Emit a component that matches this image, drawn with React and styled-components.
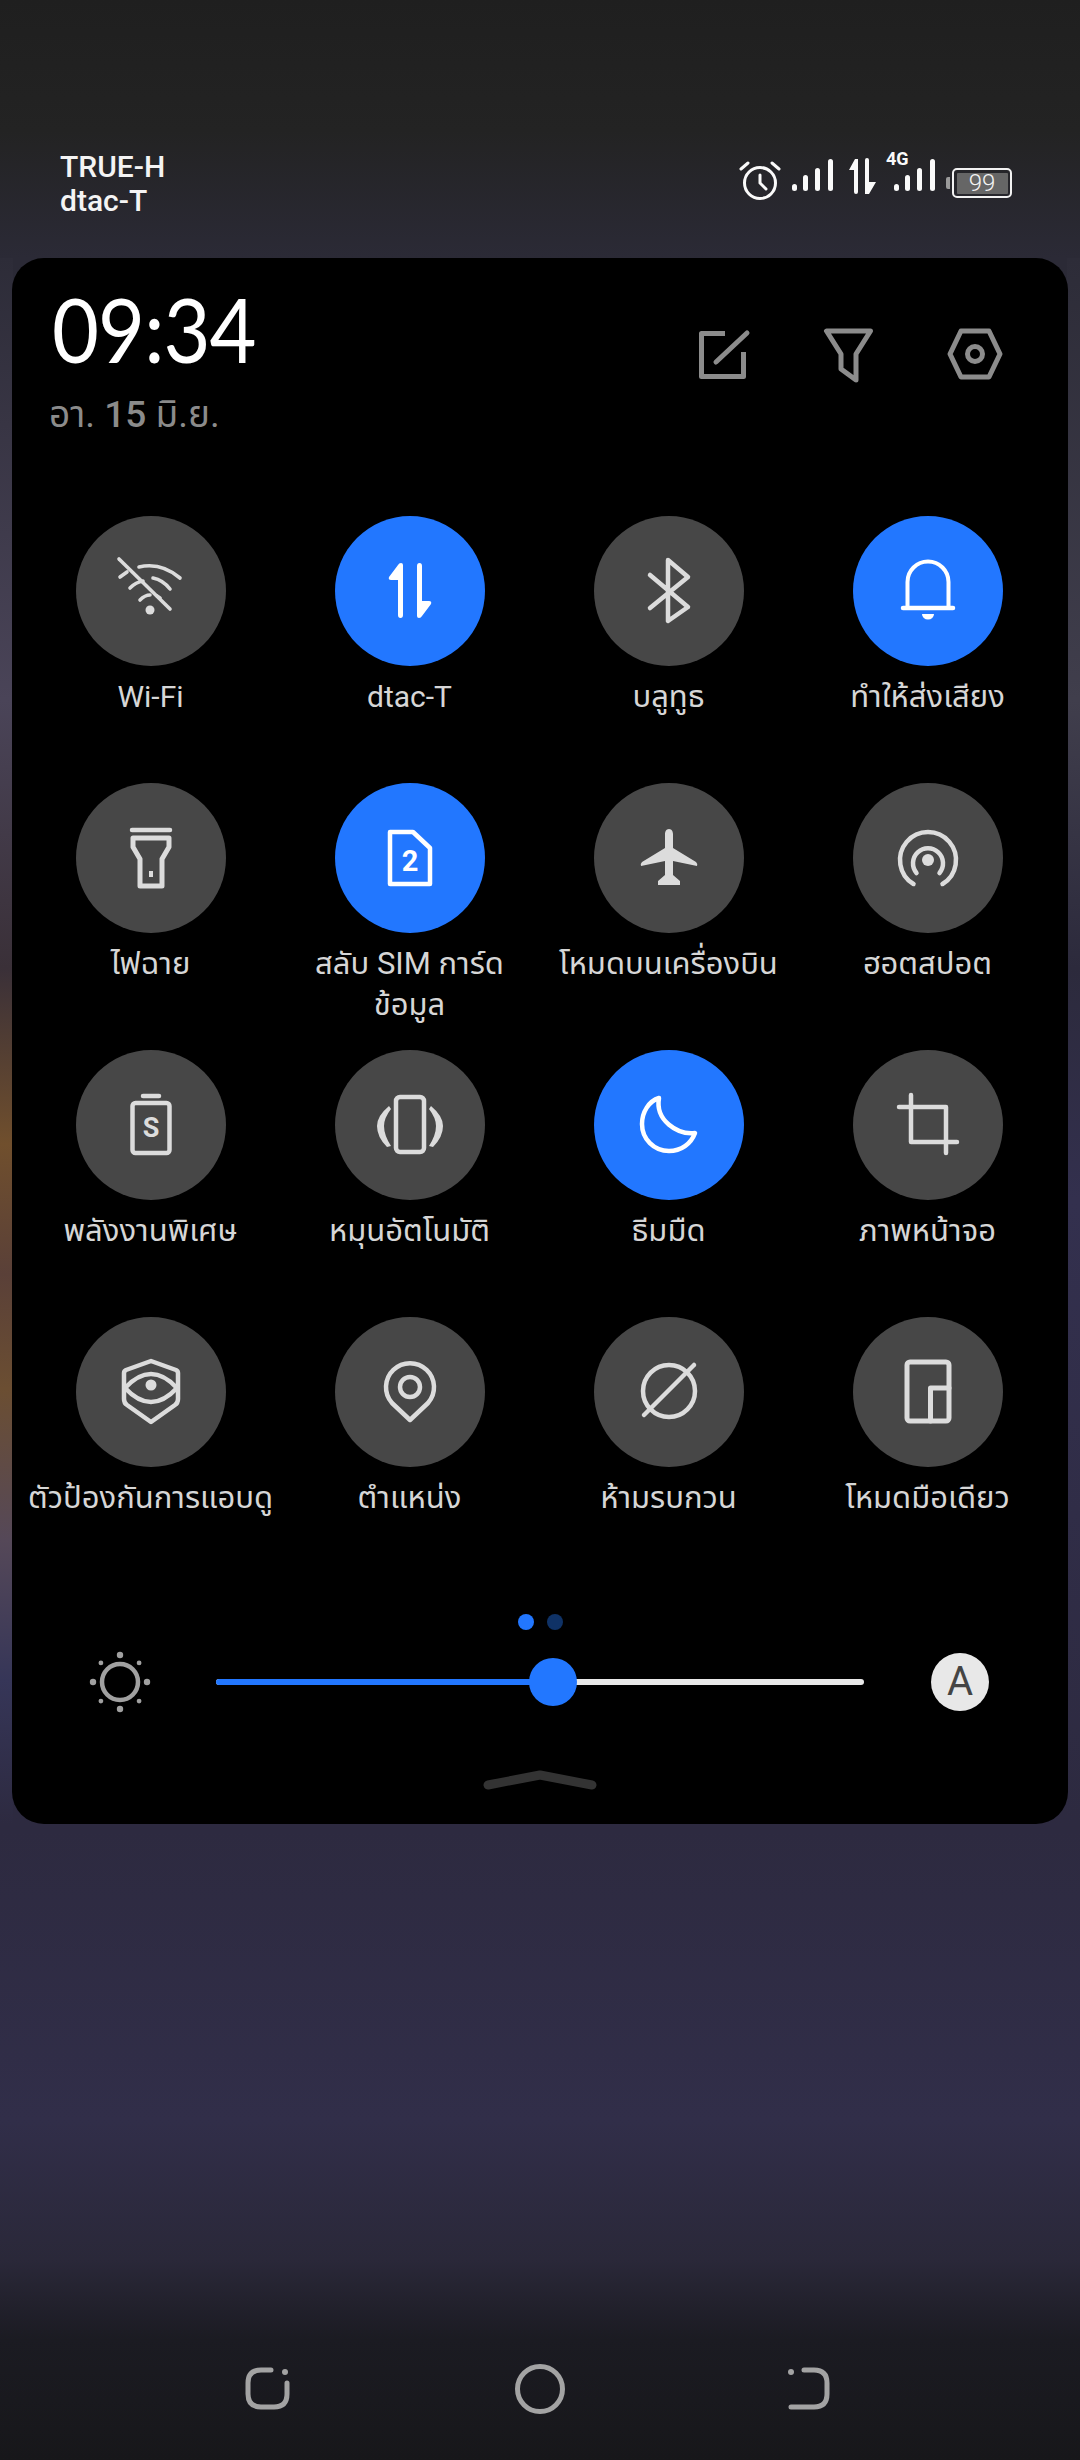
import React from "react";
import styled, { createGlobalStyle } from "styled-components";

const Global = createGlobalStyle`
  html, body { margin: 0; padding: 0; background: #1c1c20; }
  * { box-sizing: border-box; }
`;

const FONT = `Roboto, "Noto Sans Thai", "Noto Sans", "DejaVu Sans", sans-serif`;

const Screen = styled.div`
  width: 1080px;
  height: 2460px;
  overflow: hidden;
  display: flex;
  flex-direction: column;
  font-family: ${FONT};
  background:
    linear-gradient(180deg, #2d2c38 0, #4a4458 442px, #3a3038 710px, #704f2d 886px, #5a4038 1016px, #6b4e32 1131px, #554858 1282px, #363658 1422px, #2d2a40 1566px) 0 258px / 13px 1566px no-repeat,
    linear-gradient(180deg, #2d2c38 0, #403e4c 442px, #2c2a3c 710px, #33304e 942px, #2d2a40 1566px) right 0 top 258px / 13px 1566px no-repeat,
    linear-gradient(180deg, #1f1f1f 0, #232323 130px, #2b2a36 258px, #2d2a40 1830px, #312e49 2120px, #2a2839 2260px, #1b1b22 2340px, #17171a 2460px);
`;

const StatusBar = styled.header`
  height: 258px;
  flex: none;
  padding: 150px 68px 0 60px;
  display: flex;
  justify-content: space-between;
  align-items: flex-start;
`;

const Carriers = styled.div`
  color: #f4f4f4;
  font-size: 30px;
  font-weight: 500;
  line-height: 34px;
`;

const StatusIcons = styled.div`
  display: flex;
  align-items: flex-start;
  padding-top: 9px;
`;

const StatusSvg = styled.svg`
  display: block;
  flex: none;
  margin-left: ${(p) => p.$gap || 0}px;
  margin-top: ${(p) => p.$top || 0}px;
  color: #fafafa;
`;

const NetworkSignal = styled.div`
  position: relative;
  flex: none;
  margin-left: ${(p) => p.$gap}px;
`;

const NetworkTag = styled.span`
  position: absolute;
  left: -7px;
  top: -9px;
  color: #fafafa;
  font-size: 18px;
  font-weight: 700;
  line-height: 18px;
`;

const Battery = styled.div`
  position: relative;
  margin-left: 15px;
  margin-top: 9px;
  width: 60px;
  height: 30px;
  flex: none;
  border: 2.5px solid #f2f2f2;
  border-radius: 5px;
  padding: 2.5px;
  display: flex;
  &::before {
    content: "";
    position: absolute;
    left: -8px;
    top: 7px;
    width: 4px;
    height: 12px;
    border-radius: 2px 0 0 2px;
    background: #9a9a9a;
  }
`;

const BatteryFill = styled.div`
  flex: 1;
  background: #666;
  border-radius: 1px;
  color: #f4f4f4;
  font-size: 24px;
  font-weight: 300;
  line-height: 20px;
  text-align: center;
`;

const Panel = styled.section`
  margin: 0 12px;
  height: 1566px;
  flex: none;
  background: #000;
  border-radius: 32px;
  display: flex;
  flex-direction: column;
`;

const PanelHeader = styled.div`
  height: 258px;
  flex: none;
  display: flex;
  justify-content: space-between;
  padding: 0 65px 0 38px;
`;

const ClockBlock = styled.div`
  padding-top: 25px;
`;

const Clock = styled.div`
  color: #fff;
  font-family: Lato, Roboto, sans-serif;
  font-size: 90px;
  font-weight: 400;
  line-height: 90px;
  letter-spacing: -1px;
  margin-left: 2px;
  transform: scaleX(0.9);
  transform-origin: left center;
`;

const DateLine = styled.div`
  margin-top: 19px;
  margin-left: -1px;
  color: #8b8b8b;
  font-size: 37px;
  line-height: 46px;
`;

const DateNum = styled.span`
  font-weight: 500;
`;

const HeaderActions = styled.div`
  display: flex;
  gap: 70px;
  padding-top: 68px;
  align-items: flex-start;
`;

const ActionSvg = styled.svg`
  display: block;
  color: #8c8c8c;
`;

const Grid = styled.div`
  display: grid;
  grid-template-columns: repeat(4, 259px);
  grid-auto-rows: 267px;
  padding: 0 9px;
`;

const Tile = styled.div`
  display: flex;
  flex-direction: column;
  align-items: center;
`;

const Bubble = styled.div`
  width: 150px;
  height: 150px;
  flex: none;
  border-radius: 50%;
  display: flex;
  align-items: center;
  justify-content: center;
  background: ${(p) => (p.$on ? "#2277ff" : "#474747")};
  color: ${(p) => (p.$on ? "#ffffff" : "#dcdcdc")};
`;

const IconSvg = styled.svg`
  display: block;
  fill: none;
  stroke: currentColor;
  stroke-width: 4.5;
  stroke-linecap: round;
  stroke-linejoin: round;
`;

const Label = styled.div`
  margin-top: 10px;
  color: #d6d6d6;
  font-size: ${(p) => (p.$latin ? 30 : 31)}px;
  line-height: 41px;
  text-align: center;
  white-space: pre-line;
`;

const Dots = styled.div`
  display: flex;
  justify-content: center;
  gap: 13px;
  margin: 30px 0 0 -1px;
  padding-left: 2px;
`;

const Dot = styled.span`
  width: 16px;
  height: 16px;
  border-radius: 50%;
  background: ${(p) => (p.$on ? "#2277ff" : "#0f3266")};
`;

const BrightnessRow = styled.div`
  display: flex;
  align-items: center;
  height: 60px;
  margin-top: 22px;
  padding: 0 0 0 76px;
`;

const SunSvg = styled.svg`
  display: block;
  flex: none;
  color: #a0a0a0;
`;

const Track = styled.div`
  position: relative;
  width: 648px;
  height: 6px;
  margin-left: 64px;
  border-radius: 3px;
  background: #e8e8e8;
`;

const TrackFill = styled.div`
  height: 100%;
  border-radius: 3px 0 0 3px;
  background: #2277ff;
`;

const Thumb = styled.div`
  position: absolute;
  top: -21px;
  width: 48px;
  height: 48px;
  margin-left: -24px;
  border-radius: 50%;
  background: #2277ff;
`;

const AutoButton = styled.div`
  width: 58px;
  height: 58px;
  margin-left: 67px;
  border-radius: 50%;
  background: #e8e8e8;
  color: #444;
  font-size: 40px;
  font-weight: 400;
  line-height: 58px;
  text-align: center;
`;

const Handle = styled.svg`
  display: block;
  margin: 56px auto 0;
`;

const NavBar = styled.nav`
  flex: none;
  display: flex;
  justify-content: center;
  align-items: center;
  gap: 219px;
  margin-top: 538px;
`;

const NavSvg = styled.svg`
  display: block;
  fill: none;
  stroke: #a3a3a3;
  stroke-width: 5;
  stroke-linecap: round;
  stroke-linejoin: round;
`;

const NavDot = styled.circle`
  fill: #a3a3a3;
  stroke: none;
`;

const SvgLabel = styled.text`
  font-family: Roboto, sans-serif;
  fill: currentColor;
  stroke: none;
  font-weight: 700;
  text-anchor: middle;
`;

const Icon = ({ children }) => (
  <IconSvg width="80" height="80" viewBox="-40 -40 80 80">
    {children}
  </IconSvg>
);

const Solid = styled.path`
  fill: currentColor;
  stroke: none;
`;

const Filled = styled.circle`
  fill: currentColor;
  stroke: none;
`;

const icons = {
  wifi: (
    <Icon>
      <path strokeWidth="3.6" d="M-32 -32 L19 18" />
      <path strokeWidth="3.6" d="M-12 -24 Q10 -29 29 -13 M-31 -14 L-24 -19 M-21 -3 Q-15 -9 -8 -10 M2 -13 Q12 -11 19 -2 M-11 9 Q-6 4 -1 4 M6 5 L9 7" />
      <Filled cx="-1" cy="19" r="4.5" />
    </Icon>
  ),
  data: (
    <Icon>
      <Solid d="M-7 -26 Q-7 -28 -9 -28 Q-11 -28 -12 -26 L-21 -14 Q-22 -11 -19 -11 L-12 -11 L-12 24 Q-12 27 -9.5 27 Q-7 27 -7 24 Z" />
      <Solid d="M7 25 Q7 27 9 27 Q11 27 12 25 L21 13 Q22 10 19 10 L12 10 L12 -25 Q12 -28 9.5 -28 Q7 -28 7 -25 Z" />
    </Icon>
  ),
  bluetooth: (
    <Icon>
      <path d="M-19 -16 L19 16 L-1 30 L-1 -31 L19 -14 L-19 17" />
    </Icon>
  ),
  bell: (
    <Icon>
      <path strokeWidth="4" d="M-20.5 16 V-9 A20.5 20.5 0 0 1 20.5 -9 V16" />
      <path strokeWidth="4.5" d="M-25 17 H25" />
      <Solid d="M-6 23 H6 A6 5.5 0 0 1 -6 23 Z" />
    </Icon>
  ),
  flash: (
    <Icon>
      <path d="M-19 -28 H19" />
      <path strokeWidth="5" d="M-18 -20 H18 V-11 L11 1 V28 H-11 V1 L-18 -11 Z" />
      <Solid d="M-2 13 H2 V19 H-2 Z" />
    </Icon>
  ),
  sim: (
    <Icon>
      <path d="M-20 -26 H3 L20 -10 V26 H-20 Z" />
      <SvgLabel x="0" y="13" fontSize="29">2</SvgLabel>
    </Icon>
  ),
  plane: (
    <Icon>
      <Solid d="M0 -29 C-3 -29 -4 -26 -4 -24 V-10 L-27 4 Q-29 6 -28 8 L-4 3 V17 L-11 23 V27 H11 V23 L4 17 V3 L28 8 Q29 6 27 4 L4 -10 V-24 C4 -26 3 -29 0 -29 Z" />
    </Icon>
  ),
  hotspot: (
    <Icon>
      <Filled cx="0" cy="2" r="6" />
      <path d="M-11.5 15 A15 15 0 1 1 11.5 15" />
      <path d="M-14.5 26 A28 28 0 1 1 14.5 26" />
    </Icon>
  ),
  saver: (
    <Icon>
      <path d="M-8 -29 H8" />
      <rect x="-18.5" y="-22" width="37" height="50" rx="3" />
      <SvgLabel x="0" y="12" fontSize="27">S</SvgLabel>
    </Icon>
  ),
  rotate: (
    <Icon>
      <rect x="-14" y="-28" width="28" height="55" rx="4" />
      <Solid d="M-21 -19 Q-33 -9 -33 1 Q-33 12 -23 22 L-19 21 Q-26 10 -26 1 Q-26 -7 -19 -16 Z" />
      <Solid d="M21 -19 Q33 -9 33 1 Q33 12 23 22 L19 21 Q26 10 26 1 Q26 -7 19 -16 Z" />
    </Icon>
  ),
  moon: (
    <Icon>
      <path d="M-10 -27 C-20 -24 -27 -13 -27 -1 C-27 14 -15 26 0 26 C12 26 22 19 26 8 C8 10 -14 -5 -10 -27 Z" />
    </Icon>
  ),
  crop: (
    <Icon>
      <path d="M-29 -18 H18 V28 M-17 -30 V17 H29" />
    </Icon>
  ),
  shield: (
    <Icon>
      <path d="M0 -31 L25 -22 Q27 -21 27 -19 V7 Q27 11 24 13 L0 30 L-24 13 Q-27 11 -27 7 V-19 Q-27 -21 -25 -22 Z" />
      <path d="M-26 -4 Q0 -32 26 -4 Q0 24 -26 -4 Z" />
      <Filled cx="0" cy="-7" r="5.5" />
    </Icon>
  ),
  pin: (
    <Icon>
      <path d="M0 28 L-18 11 A24 24 0 1 1 18 11 Z" />
      <circle cx="0" cy="-5" r="10" />
    </Icon>
  ),
  dnd: (
    <Icon>
      <circle cx="0" cy="-1" r="26" />
      <path d="M-25 23 L25 -27" />
    </Icon>
  ),
  hand: (
    <Icon>
      <rect x="-21" y="-30" width="42" height="59" rx="3" strokeWidth="5" />
      <path strokeWidth="5" d="M2.5 29 V-4 H21" />
    </Icon>
  ),
};

const tiles = [
  ["wifi", "Wi-Fi", false, true],
  ["data", "dtac-T", true, true],
  ["bluetooth", "บลูทูธ", false],
  ["bell", "ทำให้ส่งเสียง", true],
  ["flash", "ไฟฉาย", false],
  ["sim", "สลับ SIM การ์ด\nข้อมูล", true],
  ["plane", "โหมดบนเครื่องบิน", false],
  ["hotspot", "ฮอตสปอต", false],
  ["saver", "พลังงานพิเศษ", false],
  ["rotate", "หมุนอัตโนมัติ", false],
  ["moon", "ธีมมืด", true],
  ["crop", "ภาพหน้าจอ", false],
  ["shield", "ตัวป้องกันการแอบดู", false],
  ["pin", "ตำแหน่ง", false],
  ["dnd", "ห้ามรบกวน", false],
  ["hand", "โหมดมือเดียว", false],
];

const Signal = ({ gap = 0 }) => (
  <StatusSvg $gap={gap} width="44" height="34" viewBox="0 0 44 34" fill="currentColor">
    <rect x="1" y="25" width="5" height="7" rx="2.5" />
    <rect x="12" y="16" width="5" height="16" rx="2.5" />
    <rect x="24" y="9" width="5" height="23" rx="2.5" />
    <rect x="37" y="0" width="5" height="32" rx="2.5" />
  </StatusSvg>
);

export default function App() {
  return (
    <Screen>
      <Global />
      <StatusBar>
        <Carriers>
          TRUE-H
          <br />
          dtac-T
        </Carriers>
        <StatusIcons>
          <StatusSvg $top={-1} width="44" height="44" viewBox="-22 -22 44 44" fill="none" stroke="currentColor" strokeWidth="3" strokeLinecap="round">
            <circle cx="0" cy="3" r="15.5" />
            <path d="M0 -5 V3 L6 9 M-19 -11 L-12 -17 M19 -11 L12 -17" />
          </StatusSvg>
          <Signal gap={9} />
          <StatusSvg $gap={13} $top={-1} width="30" height="38" viewBox="0 0 30 38" fill="currentColor">
            <path d="M10 1 H7 L1 12 H6 V34 Q6 36 8 36 Q10 36 10 34 Z" />
            <path d="M17 2 Q17 0 19 0 Q21 0 21 2 V24 H28 L21 36 H17 Z" />
          </StatusSvg>
          <NetworkSignal $gap={15}>
            <NetworkTag>4G</NetworkTag>
            <Signal />
          </NetworkSignal>
          <Battery>
            <BatteryFill>99</BatteryFill>
          </Battery>
        </StatusIcons>
      </StatusBar>

      <Panel>
        <PanelHeader>
          <ClockBlock>
            <Clock>09:34</Clock>
            <DateLine>
              อา. <DateNum>15</DateNum> มิ.ย.
            </DateLine>
          </ClockBlock>
          <HeaderActions>
            <ActionSvg width="54" height="56" viewBox="0 0 54 56" fill="none" stroke="currentColor" strokeWidth="5" strokeLinejoin="round">
              <path d="M28 7.5 H4.5 V50.5 H46.5 V26" />
              <path d="M50 7 L19 36" strokeLinecap="round" />
            </ActionSvg>
            <ActionSvg width="56" height="60" viewBox="0 0 56 60" fill="none" stroke="currentColor" strokeWidth="5" strokeLinejoin="round">
              <path d="M5.5 5 H49.5 L35 28 V54 L20 43 V28 Z" />
            </ActionSvg>
            <ActionSvg width="56" height="56" viewBox="0 0 56 56" fill="none" stroke="currentColor" strokeWidth="5" strokeLinejoin="round">
              <path d="M14 5 H42 L53 28 L42 51 H14 L3 28 Z" />
              <circle cx="28" cy="28" r="7.5" />
            </ActionSvg>
          </HeaderActions>
        </PanelHeader>

        <Grid>
          {tiles.map(([icon, label, on, latin]) => (
            <Tile key={icon}>
              <Bubble $on={on}>{icons[icon]}</Bubble>
              <Label $latin={latin}>{label}</Label>
            </Tile>
          ))}
        </Grid>

        <Dots>
          <Dot $on />
          <Dot />
        </Dots>

        <BrightnessRow>
          <SunSvg width="64" height="64" viewBox="-32 -32 64 64">
            <circle r="18" fill="none" stroke="currentColor" strokeWidth="4.5" />
            {[0, 45, 90, 135, 180, 225, 270, 315].map((a) => (
              <circle
                key={a}
                cx={Math.cos((a * Math.PI) / 180) * 27}
                cy={Math.sin((a * Math.PI) / 180) * 27}
                r={a % 90 === 0 ? 3.2 : 2.4}
                fill="currentColor"
              />
            ))}
          </SunSvg>
          <Track>
            <TrackFill style={{ width: "52%" }} />
            <Thumb style={{ left: "52%" }} />
          </Track>
          <AutoButton>A</AutoButton>
        </BrightnessRow>

        <Handle width="120" height="24" viewBox="0 0 120 24" fill="none" stroke="#333" strokeWidth="9" strokeLinecap="round" strokeLinejoin="round">
          <path d="M8 17 L60 7 L112 17" />
        </Handle>
      </Panel>

      <NavBar>
        <NavSvg width="50" height="46" viewBox="0 0 50 46">
          <path d="M27 4 H17 Q4 4 4 17 V28 Q4 41 17 41 H30 Q43 41 43 28 V17" />
          <NavDot cx="41" cy="6" r="3" />
        </NavSvg>
        <NavSvg width="54" height="54" viewBox="0 0 54 54">
          <circle cx="27" cy="27" r="22.5" />
        </NavSvg>
        <NavSvg width="50" height="46" viewBox="0 0 50 46">
          <path d="M18 4 H28 Q41 4 41 17 V28 Q41 41 28 41 H5" />
          <NavDot cx="5" cy="6" r="3" />
        </NavSvg>
      </NavBar>
    </Screen>
  );
}
